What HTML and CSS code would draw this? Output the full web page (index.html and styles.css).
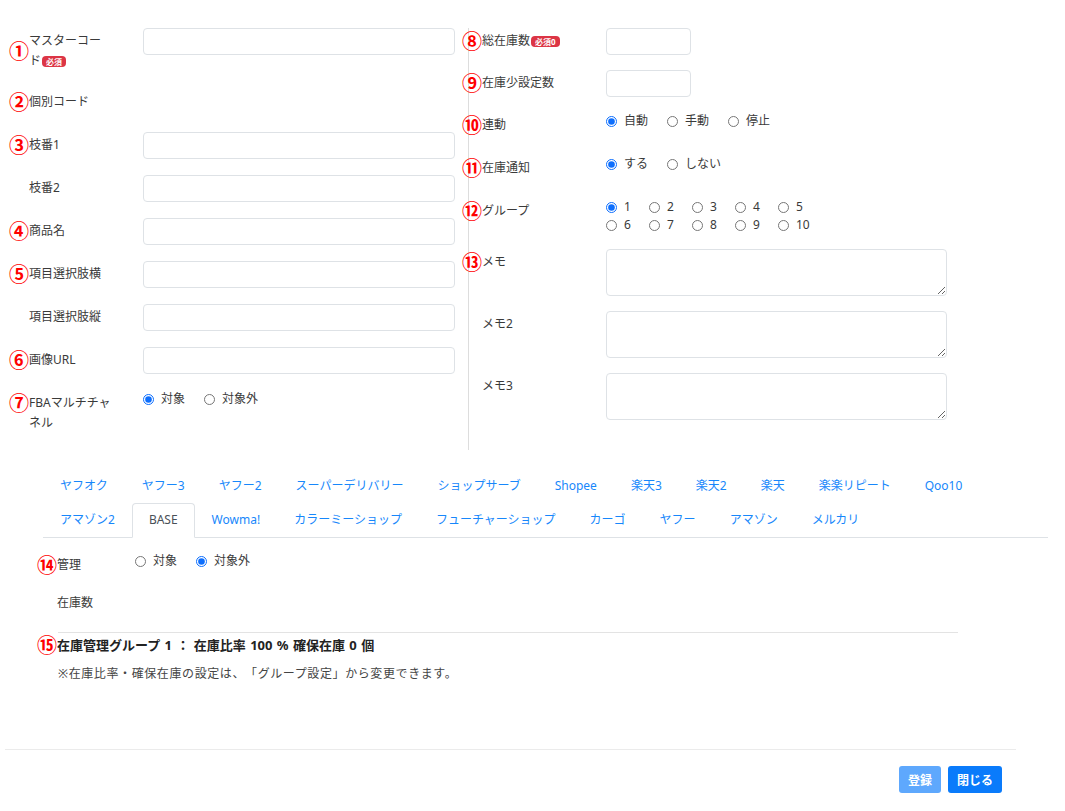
FILE: index.html
```html
<!DOCTYPE html>
<html lang="ja">
<head>
    <meta charset="UTF-8">
    <title>商品登録</title>
    <link rel="stylesheet" href="styles.css">
</head>
<body>
    <div class="form-top">
        <!-- 左カラム -->
        <div class="col col-left">
            <div class="row">
                <label class="lbl mid"><span class="num">①</span><span class="txt">マスターコー<span class="nw">ド<span class="badge">必須</span></span></span></label>
                <input type="text" class="input">
            </div>
            <div class="row row-empty">
                <label class="lbl"><span class="num">②</span><span class="txt">個別コード</span></label>
            </div>
            <div class="row">
                <label class="lbl"><span class="num">③</span><span class="txt">枝番1</span></label>
                <input type="text" class="input">
            </div>
            <div class="row">
                <label class="lbl"><span class="num"></span><span class="txt">枝番2</span></label>
                <input type="text" class="input">
            </div>
            <div class="row">
                <label class="lbl"><span class="num">④</span><span class="txt">商品名</span></label>
                <input type="text" class="input">
            </div>
            <div class="row">
                <label class="lbl"><span class="num">⑤</span><span class="txt">項目選択肢横</span></label>
                <input type="text" class="input">
            </div>
            <div class="row">
                <label class="lbl"><span class="num"></span><span class="txt">項目選択肢縦</span></label>
                <input type="text" class="input">
            </div>
            <div class="row">
                <label class="lbl"><span class="num">⑥</span><span class="txt">画像URL</span></label>
                <input type="text" class="input">
            </div>
            <div class="row">
                <label class="lbl"><span class="num">⑦</span><span class="txt">FBAマルチチャネル</span></label>
                <div class="radios">
                    <label class="opt"><input type="radio" name="fba" checked>対象</label>
                    <label class="opt"><input type="radio" name="fba">対象外</label>
                </div>
            </div>
        </div>

        <!-- 右カラム -->
        <div class="col col-right">
            <div class="row">
                <label class="lbl"><span class="num">⑧</span><span class="txt">総在庫数<span class="badge">必須0</span></span></label>
                <input type="text" class="input input-sm">
            </div>
            <div class="row">
                <label class="lbl"><span class="num">⑨</span><span class="txt">在庫少設定数</span></label>
                <input type="text" class="input input-sm">
            </div>
            <div class="row row-radio">
                <label class="lbl"><span class="num">⑩</span><span class="txt">連動</span></label>
                <div class="radios">
                    <label class="opt"><input type="radio" name="link" checked>自動</label>
                    <label class="opt"><input type="radio" name="link">手動</label>
                    <label class="opt"><input type="radio" name="link">停止</label>
                </div>
            </div>
            <div class="row row-radio">
                <label class="lbl"><span class="num">⑪</span><span class="txt">在庫通知</span></label>
                <div class="radios">
                    <label class="opt"><input type="radio" name="notice" checked>する</label>
                    <label class="opt"><input type="radio" name="notice">しない</label>
                </div>
            </div>
            <div class="row">
                <label class="lbl"><span class="num">⑫</span><span class="txt">グループ</span></label>
                <div class="radios radio-grid">
                    <label class="opt"><input type="radio" name="group" checked>1</label>
                    <label class="opt"><input type="radio" name="group">2</label>
                    <label class="opt"><input type="radio" name="group">3</label>
                    <label class="opt"><input type="radio" name="group">4</label>
                    <label class="opt"><input type="radio" name="group">5</label>
                    <label class="opt"><input type="radio" name="group">6</label>
                    <label class="opt"><input type="radio" name="group">7</label>
                    <label class="opt"><input type="radio" name="group">8</label>
                    <label class="opt"><input type="radio" name="group">9</label>
                    <label class="opt"><input type="radio" name="group">10</label>
                </div>
            </div>
            <div class="row">
                <label class="lbl"><span class="num">⑬</span><span class="txt">メモ</span></label>
                <textarea class="memo"></textarea>
            </div>
            <div class="row">
                <label class="lbl"><span class="num"></span><span class="txt">メモ2</span></label>
                <textarea class="memo"></textarea>
            </div>
            <div class="row">
                <label class="lbl"><span class="num"></span><span class="txt">メモ3</span></label>
                <textarea class="memo"></textarea>
            </div>
        </div>
    </div>

    <!-- モール別タブ -->
    <ul class="tabs">
        <li class="tab">ヤフオク</li>
        <li class="tab">ヤフー3</li>
        <li class="tab">ヤフー2</li>
        <li class="tab">スーパーデリバリー</li>
        <li class="tab">ショップサーブ</li>
        <li class="tab">Shopee</li>
        <li class="tab">楽天3</li>
        <li class="tab">楽天2</li>
        <li class="tab">楽天</li>
        <li class="tab">楽楽リピート</li>
        <li class="tab">Qoo10</li>
        <li class="tab">アマゾン2</li>
        <li class="tab active">BASE</li>
        <li class="tab">Wowma!</li>
        <li class="tab">カラーミーショップ</li>
        <li class="tab">フューチャーショップ</li>
        <li class="tab">カーゴ</li>
        <li class="tab">ヤフー</li>
        <li class="tab">アマゾン</li>
        <li class="tab">メルカリ</li>
    </ul>

    <div class="tab-body">
        <div class="row row-radio">
            <label class="lbl lbl-tab"><span class="num">⑭</span><span class="txt">管理</span></label>
            <div class="radios">
                <label class="opt"><input type="radio" name="manage">対象</label>
                <label class="opt"><input type="radio" name="manage" checked>対象外</label>
            </div>
        </div>
        <div class="row row-empty row-stock">
            <label class="lbl lbl-tab"><span class="num"></span><span class="txt">在庫数</span></label>
        </div>
        <hr class="line">
        <div class="group-info"><span class="num">⑮</span>在庫管理グループ 1 ： 在庫比率 100 % 確保在庫 0 個</div>
        <p class="note">※在庫比率・確保在庫の設定は、「グループ設定」から変更できます。</p>
    </div>

    <div class="footer">
        <button class="btn btn-off">登録</button>
        <button class="btn">閉じる</button>
    </div>
</body>
</html>
```

FILE: styles.css
```css
body {
    margin: 0;
    background-color: #fff;
    color: #3a3a3a;
    font-family: "Noto Sans", "Noto Sans CJK JP", sans-serif;
    font-size: 12px;
    text-spacing-trim: space-all;
}

.form-top {
    display: flex;
    align-items: flex-start;
    padding: 28px 0 0 10px;
}

.col-left {
    width: 458px;
}

.col-right {
    border-left: 1px solid #ddd;
    padding-bottom: 30px;
}

.row {
    display: flex;
    align-items: flex-start;
    margin-bottom: 16px;
}

.row:last-child {
    margin-bottom: 0;
}

.row-empty {
    min-height: 27px;
}

.col-right .row {
    margin-left: -6px;
    margin-bottom: 15px;
}

.col-right .row:last-child {
    margin-bottom: 0;
}

.col-right .row-radio {
    min-height: 28px;
}

/* ラベル */
.lbl {
    flex: none;
    display: flex;
    align-items: flex-start;
    box-sizing: border-box;
    width: 133px;
    padding: 3px 0 2px;
    line-height: 20px;
}

.lbl.mid {
    align-items: center;
}

.lbl .txt {
    width: 90px;
}

.col-right .lbl {
    width: 143px;
}

.col-right .lbl .txt {
    width: 120px;
}

.num {
    flex: none;
    display: inline-block;
    width: 20px;
    margin-left: -1px;
    color: #f00;
    font-family: "Noto Sans CJK JP", sans-serif;
    font-size: 20px;
    font-weight: bold;
    line-height: 20px;
}

.nw {
    white-space: nowrap;
}

.badge {
    display: inline-block;
    margin-left: 1px;
    padding: 0 4px;
    background-color: #dc3545;
    color: #fff;
    border-radius: 4px;
    font-size: 8px;
    font-weight: bold;
    line-height: 11px;
    vertical-align: middle;
}

/* 入力欄 */
.input {
    box-sizing: border-box;
    width: 312px;
    height: 27px;
    border: 1px solid #dee2e6;
    border-radius: 4px;
    padding: 0 8px;
}

.input-sm {
    width: 85px;
}

.memo {
    box-sizing: border-box;
    width: 341px;
    height: 47px;
    margin: 0;
    border: 1px solid #dee2e6;
    border-radius: 4px;
}

.radios {
    display: flex;
    align-items: center;
    line-height: 18px;
}

.opt {
    display: inline-flex;
    align-items: center;
    margin-right: 19px;
}

.opt input {
    width: 11px;
    height: 11px;
    margin: 0 7px 0 0;
    accent-color: #0d6efd;
}

.radio-grid {
    display: grid;
    grid-template-columns: repeat(5, 43px);
}

.radio-grid .opt {
    margin-right: 0;
}

/* タブ */
.tabs {
    display: flex;
    flex-wrap: wrap;
    list-style: none;
    margin: 19px 17px 0 43px;
    padding: 0;
    border-bottom: 1px solid #dee2e6;
}

.tab {
    padding: 7px 16px 8px;
    line-height: 18px;
    color: #1787fb;
    border: 1px solid transparent;
    border-radius: 4px 4px 0 0;
    margin-bottom: -1px;
}

.tab.active {
    color: #495057;
    background-color: #fff;
    border-color: #dee2e6 #dee2e6 #fff;
}

.tab-body {
    padding: 14px 0 0 38px;
}

.tab-body .row {
    margin-bottom: 13px;
}

.lbl-tab {
    width: 97px;
}

.row-stock {
    margin-bottom: 15px !important;
}

.line {
    width: 900px;
    margin: 0 0 0 20px;
    border: none;
    border-top: 1px solid #e3e3e3;
}

.group-info {
    display: flex;
    align-items: center;
    margin-top: 1px;
    line-height: 22px;
    font-size: 13px;
    font-weight: bold;
    word-spacing: 1px;
    color: #222;
}

.note {
    margin: 8px 0 0 20px;
    line-height: 20px;
    letter-spacing: 0.6px;
    color: #444;
}

/* フッター */
.footer {
    display: flex;
    justify-content: flex-end;
    gap: 7px;
    margin: 65px 49px 0 5px;
    padding: 16px 14px 0 0;
    border-top: 1px solid #ebebeb;
}

.btn {
    height: 27px;
    padding: 0 9px;
    border: none;
    border-radius: 3px;
    background-color: #0a7bfb;
    color: #fff;
    font-family: "Noto Sans CJK JP", sans-serif;
    font-size: 12px;
    font-weight: bold;
}

.btn-off {
    background-color: #5ea8fd;
}
```
